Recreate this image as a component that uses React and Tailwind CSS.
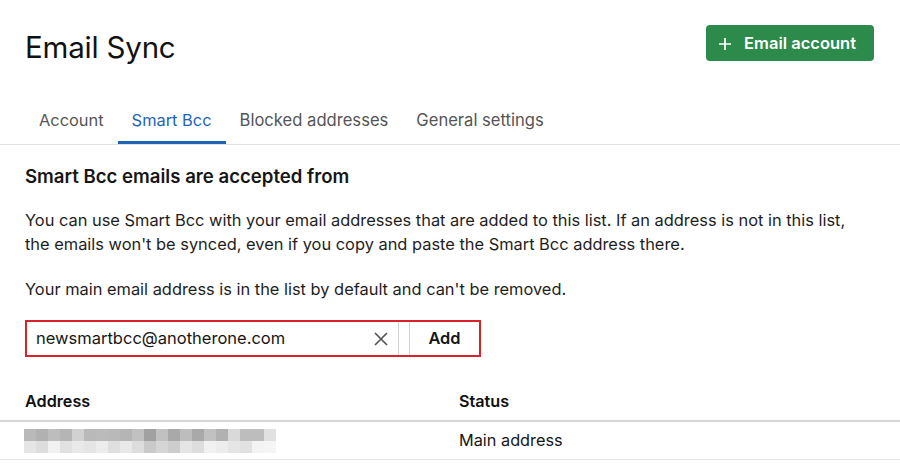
import React from "react";

const topRow = [
  "bg-[#b9b9b9]", "bg-[#b1b1b1]", "bg-[#bdbdbd]", "bg-[#b5b5b5]", "bg-[#d1d1d1]", "bg-[#b9b9b9]", "bg-[#bbbbbb]",
  "bg-[#b9b9b9]", "bg-[#b5b5b5]", "bg-[#c1c1c1]", "bg-[#a1a1a1]", "bg-[#c1c1c1]", "bg-[#a9a9a9]", "bg-[#bdbdbd]",
  "bg-[#a9a9a9]", "bg-[#c1c1c1]", "bg-[#b1b1b1]", "bg-[#d9d9d9]", "bg-[#bdbdbd]", "bg-[#bdbdbd]", "bg-[#e1e1e1]",
];
const bottomRow = [
  "bg-[#e5e5e5]", "bg-[#dddddd]", "bg-[#f1f1f1]", "bg-[#e1e1e1]", "bg-[#e9e9e9]", "bg-[#e5e5e5]", "bg-[#ededed]",
  "bg-[#dfdfdf]", "bg-[#e9e9e9]", "bg-[#dddddd]", "bg-[#c9c9c9]", "bg-[#d5d5d5]", "bg-[#cdcdcd]", "bg-[#e5e5e5]",
  "bg-[#dddddd]", "bg-[#f1f1f1]", "bg-[#ededed]", "bg-[#e5e5e5]", "bg-[#e1e1e1]", "bg-[#f3f3f3]", "bg-[#f5f5f5]",
];

export default function App() {
  return (
    <div className="w-[900px] h-[472px] bg-white overflow-hidden text-[#161616]" style={{ fontFamily: "Inter, 'Noto Sans', sans-serif" }}>
      <div className="flex items-start justify-between pl-[25px] pr-[26px] pt-[25px]">
        <h1 className="text-[29.5px] leading-[44px] font-normal text-[#111] tracking-[-0.2px]">Email Sync</h1>
        <button className="flex items-center h-[36px] rounded-[4px] bg-[#2c8a4b] text-white pl-[13px] pr-[18px] gap-[13px] text-[16.5px] font-semibold">
          <svg width="12" height="12" viewBox="0 0 12 12" className="mt-[1px]">
            <path d="M6 0v12M0 6h12" stroke="white" strokeWidth="1.7" />
          </svg>
          <span>Email account</span>
        </button>
      </div>

      <div className="mt-[28px] flex border-b border-[#e2e2e2] pl-[25px]">
        <div className="px-[14px] h-[47px] flex items-center text-[16.4px] text-[#555]">Account</div>
        <div className="px-[14px] h-[47px] flex items-center text-[16.4px] text-[#1f63b6] border-b-[3px] border-[#1f63b6] mb-[-1px] pt-[3px]">Smart Bcc</div>
        <div className="px-[14px] h-[47px] flex items-center text-[16.6px] text-[#555]">Blocked addresses</div>
        <div className="px-[14px] h-[47px] flex items-center text-[16.6px] text-[#555]">General settings</div>
      </div>

      <div className="px-[25px]">
        <h2 className="mt-[18px] text-[18.6px] leading-[26px] font-semibold text-[#161616]">Smart Bcc emails are accepted from</h2>
        <p className="mt-[19px] text-[16.4px] leading-[24px] text-[#1e1e1e] max-w-[845px]">
          You can use Smart Bcc with your email addresses that are added to this list. If an address is not in this list, the emails won't be synced, even if you copy and paste the Smart Bcc address there.
        </p>
        <p className="mt-[21px] text-[16.4px] leading-[24px] text-[#1e1e1e]">
          Your main email address is in the list by default and can't be removed.
        </p>

        <div className="mt-[19px] w-[456px] h-[37px] border-2 border-[#d8232a] flex">
          <div className="flex-1 flex items-center border-r border-[#d4d4d4] pl-[9px] pr-[8px]">
            <span className="flex-1 text-[16.5px] text-[#161616]">newsmartbcc@anotherone.com</span>
            <svg width="14" height="14" viewBox="0 0 14 14" className="mr-[2px]">
              <path d="M1 1l12 12M13 1L1 13" stroke="#555" strokeWidth="1.7" />
            </svg>
          </div>
          <div className="ml-[10px] w-[70px] border-l border-[#d4d4d4] flex items-center justify-center text-[16.4px] font-semibold text-[#161616]">
            Add
          </div>
        </div>
      </div>

      <div className="mt-[25px]">
        <div className="flex px-[25px] h-[40px] items-center border-b-2 border-[#d6d6d6] text-[16.2px] font-semibold text-[#111]">
          <div className="w-[434px]">Address</div>
          <div>Status</div>
        </div>
        <div className="flex px-[25px] h-[38px] items-center border-b border-[#e4e4e4] text-[16.3px] text-[#161616]">
          <div className="w-[434px]">
            <div className="flex flex-col w-[252px] -ml-[1px]">
              <div className="flex">
                {topRow.map((c, i) => (
                  <div key={i} className={"w-[12px] h-[12px] " + c} />
                ))}
              </div>
              <div className="flex">
                {bottomRow.map((c, i) => (
                  <div key={i} className={"w-[12px] h-[12px] " + c} />
                ))}
              </div>
            </div>
          </div>
          <div>Main address</div>
        </div>
      </div>
    </div>
  );
}
